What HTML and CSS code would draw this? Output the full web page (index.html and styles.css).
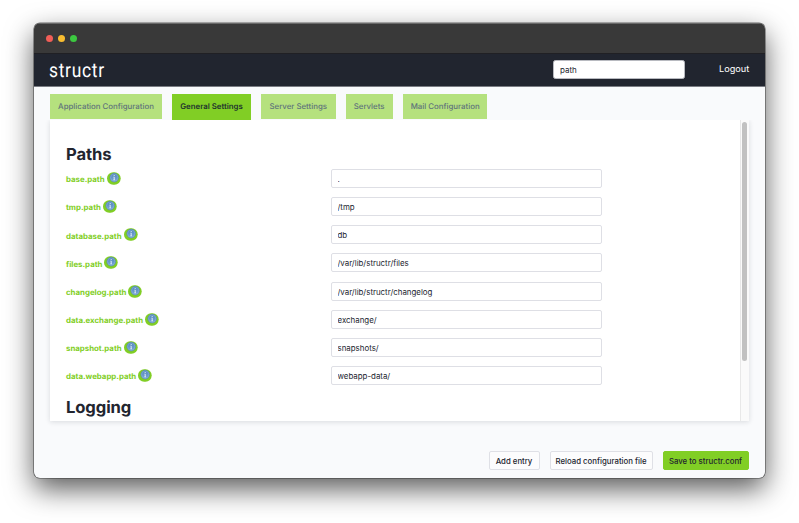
FILE: index.html
```html
<!DOCTYPE html>
<html lang="en">
<head>
<meta charset="utf-8">
<title>structr configuration</title>
<link rel="stylesheet" href="styles.css">
</head>
<body>
<svg class="defs" width="0" height="0" aria-hidden="true">
  <defs>
    <linearGradient id="blue" x1="0" y1="0" x2="0" y2="1"><stop offset="0" stop-color="#5286bd"/><stop offset="1" stop-color="#78a7d7"/></linearGradient>
    <symbol id="info" viewBox="0 0 14 13">
      <rect x="0" y="0.3" width="13.7" height="12.4" rx="6.2" fill="#81ce25"/>
      <circle cx="7.2" cy="5.6" r="4.3" fill="url(#blue)" stroke="#4e7db3" stroke-width=".6"/>
      <circle cx="7.2" cy="5.6" r="3.7" fill="none" stroke="#a2c2e2" stroke-width=".4"/>
      <path d="M7.2 3v1M6.6 5h.6v2.7M6.4 7.8h1.6" fill="none" stroke="#e6eff8" stroke-width=".9"/>
    </symbol>
  </defs>
</svg>
<div class="window">
  <div class="titlebar"><i class="dot red"></i><i class="dot yellow"></i><i class="dot green"></i></div>
  <header class="header">
    <div class="logo">structr</div>
    <input class="search" type="text" value="path">
    <a class="logout">Logout</a>
  </header>
  <main class="main">
    <nav class="tabs">
      <a class="tab application">Application Configuration</a>
      <a class="tab general active">General Settings</a>
      <a class="tab server">Server Settings</a>
      <a class="tab servlets">Servlets</a>
      <a class="tab mail">Mail Configuration</a>
    </nav>
    <section class="panel">
      <div class="content">
        <h1>Paths</h1>
        <div class="row"><label>base.path</label><svg class="info"><use href="#info"/></svg><input type="text" value="."></div>
        <div class="row"><label>tmp.path</label><svg class="info"><use href="#info"/></svg><input type="text" value="/tmp"></div>
        <div class="row"><label>database.path</label><svg class="info"><use href="#info"/></svg><input type="text" value="db"></div>
        <div class="row"><label>files.path</label><svg class="info"><use href="#info"/></svg><input type="text" value="/var/lib/structr/files"></div>
        <div class="row"><label>changelog.path</label><svg class="info"><use href="#info"/></svg><input type="text" value="/var/lib/structr/changelog"></div>
        <div class="row"><label>data.exchange.path</label><svg class="info"><use href="#info"/></svg><input type="text" value="exchange/"></div>
        <div class="row"><label>snapshot.path</label><svg class="info"><use href="#info"/></svg><input type="text" value="snapshots/"></div>
        <div class="row"><label>data.webapp.path</label><svg class="info"><use href="#info"/></svg><input type="text" value="webapp-data/"></div>
        <h1 class="logging">Logging</h1>
      </div>
      <div class="track"><div class="thumb"></div></div>
    </section>
    <footer class="actions">
      <button class="add">Add entry</button>
      <button class="reload">Reload configuration file</button>
      <button class="save">Save to structr.conf</button>
    </footer>
  </main>
</div>
</body>
</html>
```
FILE: styles.css
```css
* { box-sizing: border-box; }
html, body { height: 100%; }
body { margin: 0; padding: 23px 0 0 34px; overflow: hidden; background: #fff; font-family: Inter, "Liberation Sans", sans-serif; color: #22252f; text-rendering: geometricPrecision; }
.defs { position: absolute; }
.window { width: 731px; height: 455px; border-radius: 6px; overflow: hidden; display: flex; flex-direction: column; background: #f9fafc; box-shadow: 0 0 0 .6px rgba(0,0,0,.55), 0 11px 28px rgba(0,0,0,.65); }
.titlebar { height: 31px; flex: none; background: #393939; border-top: 1px solid #686868; border-bottom: 1px solid #202024; display: flex; align-items: center; gap: 5px; padding: 0 0 1px 12px; }
.dot { width: 7px; height: 7px; border-radius: 50%; }
.red { background: #f15e57; }
.yellow { background: #f8bd30; }
.green { background: #3cc840; }
.header { height: 33px; flex: none; background: #21252f; border-bottom: 1px solid #7a7c83; display: flex; align-items: center; padding: 0 16px 1px 15px; }
.logo { flex: 1; font: 400 20px/30px Roboto, sans-serif; color: #fff; letter-spacing: .8px; transform: scaleX(.87); transform-origin: left; }
input { font-family: inherit; color: #22252f; background: #fff; outline: none; margin: 0; }
.search { width: 132px; height: 19px; border: 1px solid #b8bac0; border-radius: 2.5px; font-size: 8px; padding: 0 6px; margin-right: 34px; }
.logout { font-size: 9.2px; color: #fff; line-height: 28px; width: 30px; white-space: nowrap; }
.main { flex: 1; min-height: 0; display: flex; flex-direction: column; padding: 7px 16.5px 8px 16px; }
.tabs { height: 26px; flex: none; display: flex; gap: 10px; align-items: flex-start; }
.tab { height: 24.5px; display: flex; align-items: center; justify-content: center; font-size: 7.85px; font-weight: 500; color: #60747b; background: #b5e17e; white-space: nowrap; }
.application { width: 112px; }
.general { width: 79px; }
.server { width: 74.5px; }
.servlets { width: 47.3px; }
.mail { width: 84.7px; }
.tab.active { height: 26px; padding-bottom: 1.5px; background: #81ce25; color: #22352e; font-weight: 600; }
.panel { height: 301px; flex: none; background: #fff; box-shadow: 0 1px 5px rgba(20,30,40,.14); display: flex; clip-path: inset(0 -8px -8px -8px); }
.content { flex: 1; overflow: hidden; padding: 25px 0 0 16px; }
h1 { margin: 0 0 4px; font-size: 16.6px; line-height: 20px; font-weight: 700; letter-spacing: -.1px; color: #22252f; }
.row { height: 19px; margin-bottom: 9.15px; display: flex; align-items: center; }
.row label { font-size: 7.85px; font-weight: 700; color: #81ce25; line-height: 12px; padding-top: 1.5px; margin-right: 2px; white-space: nowrap; }
.info { width: 14px; height: 13px; flex: none; }
.row input { margin-left: auto; margin-right: 138px; width: 271px; height: 19px; border: 1px solid #dedfe5; border-radius: 2px; padding: 1px 6px 0; font-size: 7.9px; }
.logging { margin-top: 13px; }
.track { width: 9px; background: #fafafa; border-left: 1px solid #e8e8e8; padding: 2px 2px 0 1.5px; }
.thumb { height: 239px; width: 4.5px; border-radius: 3px; background: #c1c1c1; }
.actions { margin-top: auto; display: flex; justify-content: flex-end; gap: 10px; padding: 0; }
button { height: 19px; border: 1px solid #dfe0e6; border-radius: 2px; background: #fcfcfd; font: 500 7.8px/17px Inter, sans-serif; color: #22252f; padding: 1px 0 0; white-space: nowrap; }
.add { width: 51px; }
.reload { width: 103px; }
.save { width: 86px; background: #81ce25; border-color: #81ce25; }
```
